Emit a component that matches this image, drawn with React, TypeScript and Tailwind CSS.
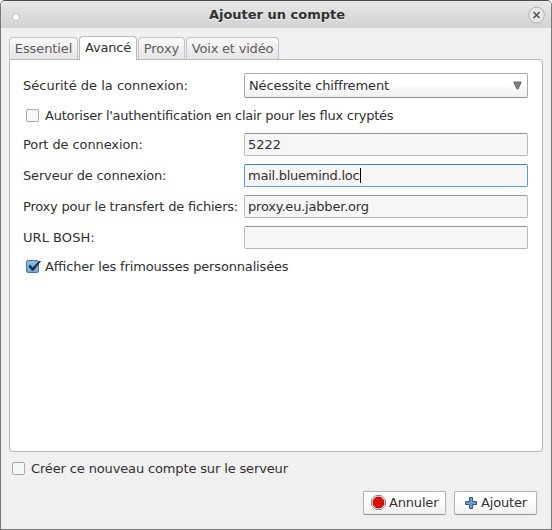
import React from "react";

type CheckProps = { label: string; spacing: string; checked?: boolean };

function Check({ label, spacing, checked }: CheckProps) {
  return (
    <label className="flex h-[13px] items-center gap-[6px]">
      <span
        className={
          checked
            ? "relative h-[13px] w-[13px] shrink-0 rounded-[2px] border border-[#4a79ae] bg-linear-to-b from-[#8fbbe8] to-[#6ea6de]"
            : "relative h-[13px] w-[13px] shrink-0 rounded-[2px] border border-[#a8a8a8] bg-[#f7f7f7]"
        }
      >
        {checked && (
          <svg className="absolute -top-px -left-px" width="16" height="13" viewBox="0 0 16 13">
            <path d="M2.4 6.2 L4.2 4.6 L6.6 7.4 L13 1 L15.2 1 L7.4 10.8 H6 Z" fill="#2b2f34" />
          </svg>
        )}
      </span>
      <span className={"whitespace-pre " + spacing}>{label}</span>
    </label>
  );
}

type FieldProps = {
  label: string;
  labelSpacing?: string;
  value: string;
  valueSpacing?: string;
  focused?: boolean;
};

function Field({ label, labelSpacing = "", value, valueSpacing = "", focused }: FieldProps) {
  return (
    <div className="flex h-[23px] items-center">
      <span className={"w-[221px] shrink-0 whitespace-pre " + labelSpacing}>{label}</span>
      <div
        className={
          focused
            ? "flex h-[23px] flex-1 items-center rounded-[2px] border border-[#5b9bd5] border-t-[#4380b8] bg-[#f6f6f6] pl-[3px]"
            : "flex h-[23px] flex-1 items-center rounded-[2px] border border-[#b8b8b8] border-t-[#929292] bg-[#f6f6f6] pl-[3px]"
        }
      >
        <span className={valueSpacing}>{value}</span>
        {focused && <span className="ml-px h-[15px] w-px bg-black" />}
      </div>
    </div>
  );
}

type ButtonProps = { label: string; children: React.ReactNode };

function Button({ label, children }: ButtonProps) {
  return (
    <button className="flex h-[24px] w-[83px] items-center rounded-[2px] border border-[#b4b4b4] border-b-[#969696] bg-linear-to-b from-white from-40% to-[#f0f0f0] pb-px shadow-[0_0_1px_#c8c8c8]">
      {children}
      <span className="tracking-[-0.18px]">{label}</span>
    </button>
  );
}

export default function App() {
  const tab =
    "flex h-[22px] items-center justify-center rounded-t-[4px] border border-b-0 border-[#c4c4c4] bg-linear-to-b from-[#fafafa] to-[#e4e4e4] text-[#5c5c5c]";
  return (
    <div className="h-[530px] w-[552px] bg-white font-['DejaVu_Sans',sans-serif] text-[13px] leading-[15px] text-[#303030] [font-feature-settings:'liga']">
      <div className="flex h-[530px] flex-col overflow-hidden rounded-t-[5px] border border-[#777] border-t-[#4b4b4b] bg-[#f0f0f0]">
        <header className="flex h-[27px] shrink-0 items-center justify-between bg-linear-to-b from-[#e8e8e8] to-[#d2d2d2] pr-[6px] pl-[11px]">
          <span className="mt-[5px] h-[8px] w-[8px] rounded-full border border-[#c2c2c2] bg-[#fafafa]" />
          <h1 className="ml-[6px] font-bold [text-shadow:0_1px_0_#f4f4f4]">Ajouter un compte</h1>
          <svg width="17" height="18" viewBox="0 0 17 18">
            <circle cx="8.5" cy="9" r="7.9" fill="#e9e9e9" stroke="#b2b2b2" />
            <path d="M5.5 6 L11.5 12 M11.5 6 L5.5 12" stroke="#555" strokeWidth="1.6" />
          </svg>
        </header>

        <nav className="mt-[8px] flex h-[23px] shrink-0 items-end pl-[8px]">
          <div className={tab + " w-[69px] tracking-[-0.1px]"}>Essentiel</div>
          <div className="relative z-10 -mb-px ml-px flex h-[24px] w-[58px] items-center justify-center rounded-t-[4px] border border-b-0 border-[#b8b8b8] bg-white pb-[2px] tracking-[-0.18px]">
            Avancé
          </div>
          <div className={tab + " ml-px w-[47px]"}>Proxy</div>
          <div className={tab + " ml-px w-[93px] tracking-[-0.2px]"}>Voix et vidéo</div>
        </nav>

        <main className="mx-[8px] flex h-[393px] w-[534px] shrink-0 flex-col rounded-[4px] rounded-tl-none border border-[#b8b8b8] bg-white pt-[13px] pr-[14px] pl-[13px]">
          <div className="flex h-[25px] shrink-0 items-center">
            <span className="w-[221px] shrink-0">Sécurité de la connexion:</span>
            <div className="flex h-[25px] flex-1 items-center justify-between rounded-[2px] border border-[#a9a9a9] border-b-[#8f8f8f] bg-linear-to-b from-white from-40% to-[#f0f0f0] pr-[5px] pl-[4px]">
              <span className="tracking-[-0.11px]">Nécessite chiffrement</span>
              <svg width="9" height="9" viewBox="0 0 9 9">
                <path d="M.8 1 H8.2 L5 8 H4 Z" fill="#808080" stroke="#606060" />
              </svg>
            </div>
          </div>
          <div className="mt-[11px] ml-[3px]">
            <Check
              label="Autoriser l'authentification en clair pour les flux cryptés"
              spacing="tracking-[-0.25px]"
            />
          </div>
          <div className="mt-[11px] flex flex-col gap-[8px]">
            <Field label="Port de connexion:" labelSpacing="tracking-[-0.1px]" value="5222" />
            <Field
              label="Serveur de connexion:"
              labelSpacing="tracking-[-0.16px]"
              value="mail.bluemind.loc"
              valueSpacing="tracking-[-0.25px]"
              focused
            />
            <Field
              label="Proxy pour le transfert de fichiers:"
              labelSpacing="tracking-[-0.2px]"
              value="proxy.eu.jabber.org"
              valueSpacing="tracking-[-0.2px]"
            />
            <Field label="URL BOSH:" labelSpacing="tracking-[0.05px]" value="" />
          </div>
          <div className="mt-[11px] ml-[3px]">
            <Check label="Afficher les frimousses personnalisées" spacing="tracking-[-0.16px]" checked />
          </div>
        </main>

        <div className="mt-[10px] ml-[11px]">
          <Check label="Créer ce nouveau compte sur le serveur" spacing="tracking-[-0.14px]" />
        </div>
        <footer className="mt-[16px] mr-[14px] flex justify-end gap-[8px]">
          <Button label="Annuler">
            <svg className="mr-[3px] ml-[7px] shrink-0" width="15" height="15" viewBox="0 0 15 15">
              <path d="M4.6 .5 H10.4 L14.5 4.6 V10.4 L10.4 14.5 H4.6 L.5 10.4 V4.6 Z" fill="#f2f2f2" stroke="#888" />
              <path d="M5.2 2.1 H9.8 L12.9 5.2 V9.8 L9.8 12.9 H5.2 L2.1 9.8 V5.2 Z" fill="#dc0c0c" stroke="#a80000" strokeWidth=".7" />
            </svg>
          </Button>
          <Button label="Ajouter">
            <svg className="mt-px mr-[4px] ml-[10px] shrink-0" width="12" height="12" viewBox="0 0 12 12">
              <path d="M4.5 .5 H7.5 V4.5 H11.5 V7.5 H7.5 V11.5 H4.5 V7.5 H.5 V4.5 H4.5 Z" fill="#6d9bcd" stroke="#31598c" strokeLinejoin="round" />
            </svg>
          </Button>
        </footer>
      </div>
    </div>
  );
}
